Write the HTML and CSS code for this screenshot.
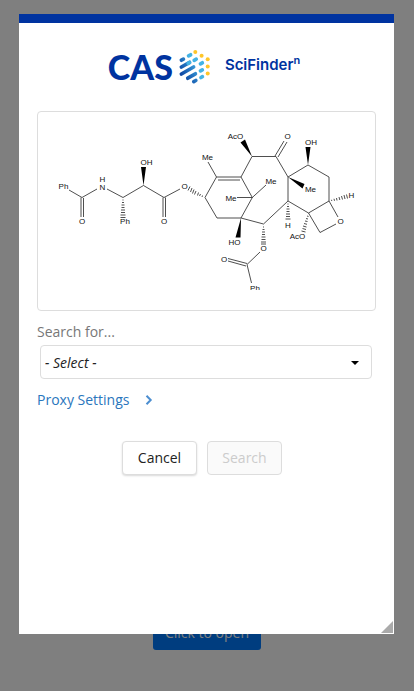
FILE: index.html
```html
<!DOCTYPE html>
<html lang="en">
<head>
<meta charset="utf-8">
<meta name="viewport" content="width=device-width, initial-scale=1">
<title>CAS SciFinder</title>
<link rel="stylesheet" href="styles.css">
</head>
<body>
<main class="page">
  <button class="open-button" type="button">Click to open</button>
</main>
<div class="overlay">
  <section class="dialog" role="dialog" aria-label="CAS SciFinder search">
    <header class="brand">
      <span class="brand-cas">CAS</span>
      <svg class="brand-mark" viewBox="178 50 34 36" aria-hidden="true">
        <defs>
          <linearGradient id="blues" gradientUnits="userSpaceOnUse" x1="179" y1="76" x2="199" y2="64">
            <stop offset="0" stop-color="#0a3f9e"/>
            <stop offset="0.5" stop-color="#2474c0"/>
            <stop offset="1" stop-color="#45b5e6"/>
          </linearGradient>
        </defs>
        <g stroke="url(#blues)" stroke-width="3.7" stroke-linecap="round">
          <path d="M181.4 61.2l2-1.1M181.4 68l8.2-4.700M181.400 75l12.200-7M187.800 79.200l7.600-4.400M193.800 82.600l2-1.100"/>
        </g>
        <g stroke="#43b3e5" stroke-width="3.7" stroke-linecap="round">
          <path d="M188.600 56.900l2-1.100M194.200 61.300l2-1.100M188.200 64.300l1.200-.7M200.500 64.800l1.800-1M200.500 71.900l1.800-1M201 78.500l1.400-.8"/>
        </g>
        <g fill="#ffc629">
          <circle cx="195.300" cy="53" r="2"/><circle cx="201.600" cy="56.700" r="2"/><circle cx="207.700" cy="60.300" r="2"/><circle cx="207.700" cy="67.500" r="2"/><circle cx="207.700" cy="74.600" r="2"/>
        </g>
      </svg>
      <span class="brand-product">SciFinder<sup>n</sup></span>
    </header>
    <div class="content">
      <figure class="structure">
        <svg class="molecule" viewBox="38 112 337 198" role="img" aria-label="Chemical structure">
          <g class="bonds">
            <path d="M69 190L82 197.500L97 189M81 197.500V217M83.500 198V217M107 189L123 197.500L143.500 185.500L164 197.500L180 189M163 197.500V217M165.500 197.500V217"/>
            <path d="M208 162L216.500 177L205 197.500L217 218H241L252.300 197.500L241 177H216.500M218 180H240M241 177L252 156.500H276L288 177V201L263.500 224L241 218M237 197.500H252.300L266 185"/>
            <path d="M275 156L284 141M278 157L287 142M288 177L308 165L329 177V201L308.500 213L288 201M308.500 213L320 232.500L336 224M329 201L338 217"/>
            <path d="M260 252L247 264.500L251.500 283M228 258.500L247 263.500M228 261L246 266"/>
          </g>
          <g class="wedges">
            <path d="M143.500 185.500L141 167H146ZM252 156.500L240.500 142.500L245 139.500ZM241 218L240.500 237.500H235.500ZM308 165L305.500 147H310.500ZM288 177L304.500 184L302.500 188.500Z"/>
          </g>
          <g class="hashes">
            <path d="M122.500 200h1M122 202.500h2M121.500 205h3M121.500 207.500h3M121 210h4M121 212.500h4M120.500 215h5M120.500 217.500h5"/>
            <path d="M202.500 195.500l-.5 1.500M200.500 194l-1 2M198.500 192.500l-1 3M196 191l-1.500 3.500M194 189.500l-1.500 4M192 188l-1.500 4M190 186.500l-2 4"/>
            <path d="M263 227h1M262.500 229.500h2M262 232h3M262 234.500h3M261.500 237h4M261.500 239.500h4M261 242h5M261 244h5"/>
            <path d="M287.500 204h1M287 206.500h2M286.500 209h3M286.500 211.500h3M286 214h4M286 216.500h4M285.500 219h5"/>
            <path d="M307 216l1.500 .5M306 218.500l2 .5M305 221l2.500 .5M304 223.500l3 .8M303 226l3.500 1M302.500 228.500l3.500 1M301.500 231l4 1"/>
            <path d="M331.500 199.800l.3 1.200M334 198.800l.5 2M336.500 198l.5 2.500M339 197l.8 3M341.500 196l1 3.500M344 195l1 4M346.500 194.500l1 4"/>
          </g>
          <g class="atoms">
            <text x="63.500" y="189">Ph</text><text x="82" y="224">O</text><text x="102.500" y="190">N</text><text x="102.500" y="182">H</text>
            <text x="125" y="224">Ph</text><text x="146.500" y="165">OH</text><text x="164" y="224">O</text><text x="184.500" y="189">O</text>
            <text x="207.500" y="160">Me</text><text x="235.500" y="139">AcO</text><text x="287.500" y="139">O</text><text x="311" y="145">OH</text>
            <text x="271" y="184">Me</text><text x="231" y="201">Me</text><text x="310.500" y="192">Me</text><text x="351.500" y="198">H</text>
            <text x="340.500" y="224">O</text><text x="288" y="228">H</text><text x="297.500" y="239">AcO</text><text x="234.500" y="245">HO</text>
            <text x="263.500" y="251">O</text><text x="224" y="262">O</text>
            <svg x="245" y="280" width="20" height="10" viewBox="245 280 20 10"><text x="255" y="291">Ph</text></svg>
          </g>
        </svg>
      </figure>
      <label class="field-label" for="search-type">Search for...</label>
      <div class="select-wrap">
        <select class="select" id="search-type"><option>- Select -</option></select>
        <svg class="select-arrow" viewBox="0 0 8 4" aria-hidden="true"><path d="M0 0H8L4 4Z"/></svg>
      </div>
      <a class="proxy" href="#">Proxy Settings
        <svg class="chevron" viewBox="0 0 8 10" aria-hidden="true"><path d="M1.500 .8L5.700 5L1.500 9.200"/></svg>
      </a>
      <div class="actions">
        <button class="button" type="button">Cancel</button>
        <button class="button" type="button" disabled>Search</button>
      </div>
    </div>
    <svg class="grip" viewBox="0 0 12 12" aria-hidden="true"><path d="M12 0V12H0Z"/></svg>
  </section>
</div>
</body>
</html>
```

FILE: styles.css
```css
* { box-sizing: border-box; }

body {
  margin: 0;
  font: 14px/20px "Noto Sans", "Open Sans", sans-serif;
  color: #222;
  background: #fff;
}

button, select { font: inherit; }

.page {
  display: flex;
  min-height: 100vh;
  align-items: flex-end;
  justify-content: center;
  padding-bottom: 41px;
}

.open-button {
  height: 34px;
  width: 108px;
  padding: 0;
  border: 0;
  border-radius: 3px;
  color: #fff;
  background: #007bff;
  font-family: "Open Sans", sans-serif;
}

.overlay {
  position: absolute;
  inset: 0;
  padding: 14px 20px 0 19px;
  background: rgba(0, 0, 0, 0.5);
}

.dialog {
  position: relative;
  min-height: calc(100vh - 71px);
  border-top: 9px solid #0033a0;
  background: #fff;
  font-family: "Open Sans", sans-serif;
}

.brand {
  display: flex;
  align-items: center;
  justify-content: center;
  height: 88px;
  padding-right: 5px;
  color: #0033a0;
  font-family: Lato, sans-serif;
}

.brand-cas { font-size: 34px; line-height: 40px; font-weight: 900; }

.brand-mark { width: 34px; height: 36px; margin: 0 13px 0 5px; }

.brand-product {
  padding-bottom: 4px;
  font: 600 15px/20px Inter, sans-serif;
}

.brand-product sup { font-size: 11px; line-height: 0; }

.content { padding: 0 18px; }

.structure {
  margin: 0;
  border: 1px solid #ddd;
  border-radius: 4px;
}

.molecule { display: block; width: 100%; }

.bonds { fill: none; stroke: #222; stroke-width: 0.8; }
.wedges { fill: #000; }
.hashes { fill: none; stroke: #222; stroke-width: 0.8; }
.atoms { font: 8px "Liberation Sans", sans-serif; text-anchor: middle; fill: #111; }

.field-label { display: block; margin-top: 11px; color: #777; }

.select-wrap { position: relative; margin: 3px 4px 0 3px; }

.select {
  display: block;
  width: 100%;
  height: 34px;
  padding: 2px 32px 0 4px;
  appearance: none;
  border: 1px solid #ddd;
  border-radius: 4px;
  color: #222;
  background: #fff;
  font-style: italic;
}

.select-arrow {
  position: absolute;
  top: 16px;
  right: 13px;
  width: 8px;
  height: 4px;
}

.proxy {
  display: inline-flex;
  align-items: center;
  gap: 16px;
  margin-top: 11px;
  color: #2a76bd;
  text-decoration: none;
}

.chevron { width: 8px; height: 10px; fill: none; stroke: #4c8ed0; stroke-width: 2; }

.actions {
  display: flex;
  justify-content: center;
  gap: 10px;
  margin-top: 31px;
  padding-right: 9px;
}

.button {
  width: 75px;
  height: 34px;
  padding: 0;
  border: 1px solid #ddd;
  border-radius: 4px;
  color: #222;
  background: #fff;
  box-shadow: 0 1px 2px rgba(0, 0, 0, 0.15);
  font-family: "Open Sans", sans-serif;
}

.button:disabled { color: #ccc; background: #fafafa; box-shadow: none; }

.grip {
  position: absolute;
  right: 1px;
  bottom: 1px;
  width: 12px;
  height: 12px;
  fill: #aaa;
}
```
